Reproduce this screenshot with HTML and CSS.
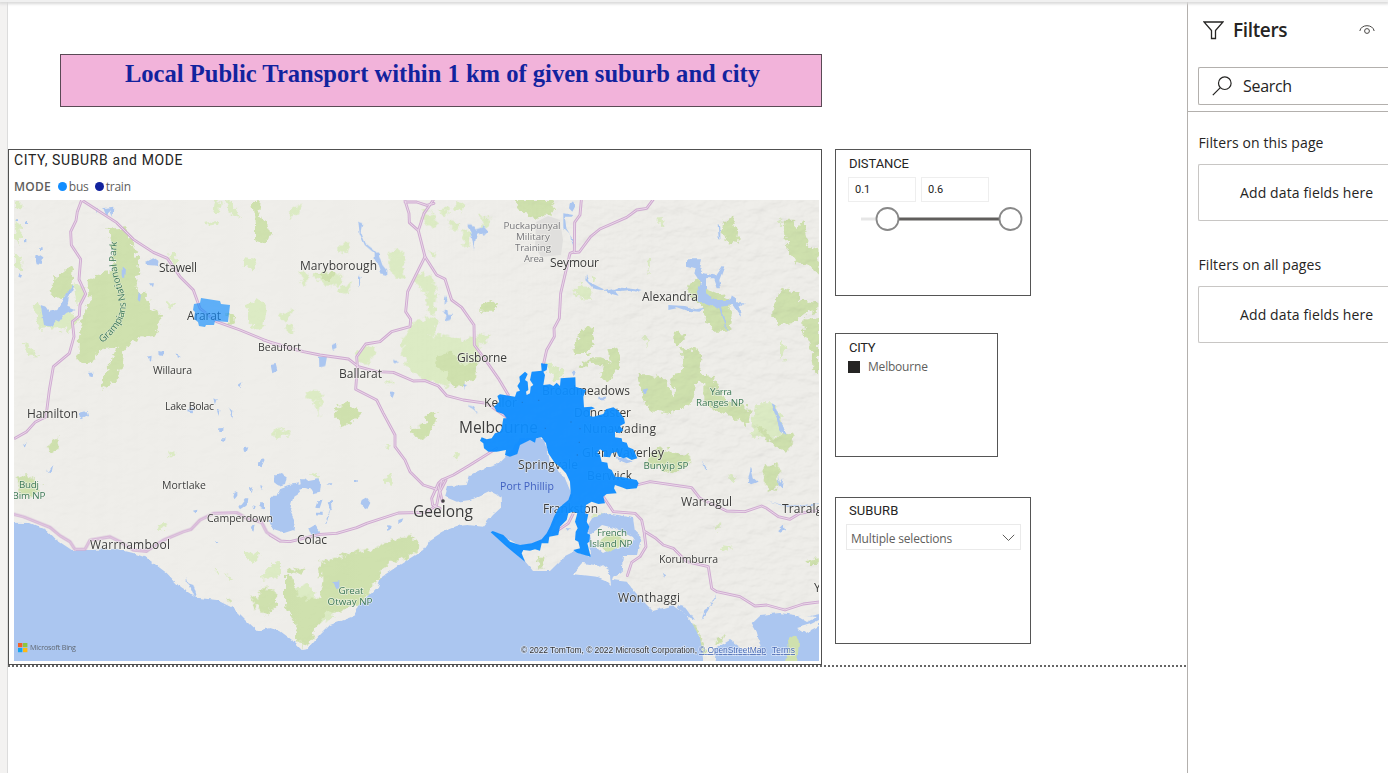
FILE: index.html
```html
<!DOCTYPE html>
<html lang="en">
<head>
<meta charset="utf-8">
<title>Local Public Transport</title>
<link rel="stylesheet" href="styles.css">
</head>
<body>
<div class="app">
  <div class="topbar"></div>
  <div class="gutter"></div>
  <main class="canvas">
    <div class="report">
      <section class="main-col">
        <h1 class="banner"><span>Local Public Transport within 1 km of given suburb and city</span></h1>
        <article class="map-card">
          <h2 class="map-title">CITY, SUBURB and MODE</h2>
          <div class="legend"><b>MODE</b><i class="dot bus"></i><span>bus</span><i class="dot train"></i><span>train</span></div>
          <svg class="map" viewBox="14 200 805 461" width="805" height="461">
            <defs>
              <filter id="rough" x="-5%" y="-5%" width="110%" height="110%"><feTurbulence type="fractalNoise" baseFrequency=".16" numOctaves="3" seed="4"/><feDisplacementMap in="SourceGraphic" scale="10" xChannelSelector="R" yChannelSelector="G"/></filter>
              <filter id="shore" x="-5%" y="-5%" width="110%" height="110%"><feTurbulence type="fractalNoise" baseFrequency=".14" numOctaves="2" seed="9"/><feDisplacementMap in="SourceGraphic" scale="4" xChannelSelector="R" yChannelSelector="G"/></filter>
              <filter id="relief" x="0" y="0" width="100%" height="100%"><feTurbulence type="fractalNoise" baseFrequency=".05 .09" numOctaves="4" seed="12"/><feDiffuseLighting surfaceScale="2.2" lighting-color="#fff"><feDistantLight azimuth="225" elevation="68"/></feDiffuseLighting></filter>
              <linearGradient id="fadeG" x1="0" x2="1"><stop offset="0" stop-color="#555"/><stop offset=".2" stop-color="#333"/><stop offset=".5" stop-color="#222"/><stop offset=".8" stop-color="#fff"/></linearGradient>
              <mask id="fade"><rect x="14" y="200" width="805" height="461" fill="url(#fadeG)"/></mask>
              <g id="roads">
                <g transform="translate(0 190) scale(.33333)">
                  <path d="M245 30L232 65 228 92 212 125 214 165 242 208 237 268 257 312 240 345 238 378 217 395 222 440 208 490 160 530 148 600 138 680 105 697 80 725 45 745"/>
                  <path d="M245 30L350 98 400 148 460 187 502 205 540 260 580 300 600 355 650 395 720 420 830 465 890 480"/>
                </g>
                <g transform="translate(270 190) scale(.33333)">
                  <path d="M-20 450L100 485 150 495 235 507 265 530 320 545 370 547 430 573 465 572 505 588 530 617 580 630 650 640 715 685"/>
                  <path d="M490 30L462 70 445 122 418 98 417 70 405 32M405 36L440 36 470 46 492 40M445 122L465 200 500 255 525 267 545 330 575 352 612 405 613 465 650 515 685 565 715 615"/>
                  <path d="M465 200L413 305 407 365 422 388 420 410 365 425 330 455 287 462 260 500 262 530 257 598 320 630 340 670 375 735 375 770 405 810 420 845 460 885 500 898"/>
                </g>
                <g transform="translate(540 190) scale(.33333)">
                  <path d="M124 30L120 75 104 97 103 185 90 190 62 310 58 385 42 415 43 440 20 480 10 525"/>
                  <path d="M103 188L118 186 152 140 180 117 260 82 290 60 320 55 340 28"/>
                </g>
                <g transform="translate(0 425) scale(.33333)">
                  <path d="M42 268L70 275 150 307 180 332 210 350 225 373 255 373 270 345 330 335 360 350 400 375 440 378 490 345 550 320 573 313 600 285 640 265 710 262 740 280 785 292 800 322 840 347"/>
                </g>
                <g transform="translate(270 425) scale(.33333)">
                  <path d="M0 330L30 348 60 350 150 328 200 325 260 308 290 295 385 264 470 262 500 240 515 165 550 150 600 120 680 70M515 165L505 175 485 220 488 240 510 250M528 165L510 200 517 230"/>
                </g>
                <g transform="translate(540 425) scale(.33333)">
                  <path d="M290 180L330 170 455 188 480 220 560 258 615 260 665 243 680 250 715 275 750 283 780 265 840 255"/>
                  <path d="M190 215L220 260 285 265 305 285 312 318 345 338 370 360 400 370 440 410 505 425 515 490 530 500 600 515 645 543 680 540 735 555 790 537 845 530"/>
                  <path d="M312 318L318 365 300 395 275 412 262 452M40 325L85 295 100 265M135 260L137 290"/>
                </g>
              </g>
            </defs>
            <rect class="land" x="14" y="200" width="805" height="461"/>
            <g class="pale" filter="url(#rough)">
              <g transform="translate(0 190) scale(.33333)">
                <path d="M42 35h25v20H42zM48 90l15 20-5 60-16-50zM42 190l25 20v35l-25-10zM645 30l20 5-5 40-20-10zM620 95l30-5 5 15-35 5zM670 30l30 10 20 45-25-10zM735 205l35 5-10 25-30-5zM500 335l20 5-8 20zM740 340l30-12 28 20-8 60-20 10-30-25zM70 455l30 25 15 25-30-15zM95 345l25-10 40 50 40-20 40 25-30 35-40-10-50 5-10-40zM505 195l20 0 5 30-15-5zM220 280l30 10 5 40-25 10z"/>
              </g>
              <g transform="translate(270 190) scale(.33333)">
                <path d="M355 190l30-12 18 25-5 60-25-5-15-30zM430 250l50 5 20 30-5 90-25-10-5-60-30-30zM430 395l60-15 15 20-15 30-45 25-45-5zM400 440l60-5 60 0 60 20 30-15 20 15-5 60-40 40-50 35-80-25-30-20-30-50zM260 480l30-20 30 25-25 35-30 0zM90 240l25 10-5 40-20-20zM130 255l40-15 50 20-15 30-50-5zM215 285l30-5-15 35-20-10zM30 375l40-15-15 30-25 0zM50 400l20 5-5 30-15-10zM60 60l40-20-15 35-20 5zM205 160l35 0-10 35-25-10zM540 90l30 10-10 25-20-5zM575 120l30 5-5 40-20 5zM455 60l30 10 20 40-20 5-30-20zM480 185l20 0-5 20zM105 600l30 0 25 10-10 25-35-5zM130 635l20 0-5 40zM505 60l35-5-10 25zM630 80l35 5-5 30-20 5zM345 570l20 0 3 15-20 0zM10 720h50v20h-50z"/>
                <path d="M620 430l40 5-10 25-30-5zM560 35l25 10-10 20-20-5z"/>
              </g>
              <g transform="translate(540 190) scale(.33333)">
                <path d="M100 300l25-25 30 30-5 25-40-5zM350 85l30 0-10 25-20-10zM150 260l20 0-5 20zM20 520l45 10 5 35-30 10zM305 435l15 10 0 30zM645 640l60 0 20 50 0 50-90 0zM710 90l20-10-5 30zM720 450l20 20-10 40-10-20zM320 210l10 0-5 50z"/>
              </g>
              <g transform="translate(0 425) scale(.33333)"><path d="M505 80l25 3-5 10-20-3zM470 300l20-10 10 15-20 10zM735 380l50 10-20 20-30-10zM675 445l25 10-15 15zM640 435l20 5-5 10zM800 430l40-25v50l-60 10z"/></g>
              <g transform="translate(270 425) scale(.33333)"><path d="M120 150l20-10 5 20zM345 155l20-5 0 30-20-5zM345 60l20 5-10 10zM550 75l20 10-10 20zM230 435l50-30 20 50-60 40-40-10zM100 565l80-10 20 20-50 20-40 20zM60 500l50-20 30 20-10 40-50 20z"/></g>
              <g transform="translate(540 425) scale(.33333)"><path d="M520 305l25-10-10 20zM545 360l30 5-10 15-20-5zM665 0l40 40-10 10zM565 145l25 10-15 15zM155 280l30-12 20 10-20 10z"/></g>
            </g>
            <g class="park" filter="url(#rough)">
              <g transform="translate(0 190) scale(.33333)">
                <path d="M322 118L375 112 395 155 412 200 418 250 407 290 440 315 450 350 480 370 486 395 460 435 420 440 395 455 370 490 362 540 350 570 305 600 310 560 335 510 350 470 300 480 275 520 250 528 235 510 237 440 255 350 272 340 262 270 310 250 340 240 335 160z"/>
                <path d="M160 265L195 235 218 232 215 280 200 320 178 328 155 310zM685 370l20 8 3 22-22 5zM755 30h25l-5 40 20 30 20 30-20 30-30-10 0-50z"/>
              </g>
              <g transform="translate(270 190) scale(.33333)">
                <path d="M500 495l40-10 30 30 25 20-10 50-30 10-20-20-10-30-30-20zM585 525l35-10-5 50-20 10-20-15zM635 345l30-15 22 15-20 20-40 0zM145 250l50-5-10 25-35 0zM735 30h110v30l-50 30-30-20-20-10zM195 650l40-10 40 30-25 25-30 20-20-30zM470 670l30 0-5 35-20 25-15-20z"/>
              </g>
              <g transform="translate(540 190) scale(.33333)">
                <path d="M555 90l20-10 20 45-5 30-20 12-25-45zM730 95h30l10 20 20-20 12 45 0 25 36 15v75l-25-25-45-15-25-35-5-50zM700 340l30-50 20 10 25 5 5 25 55 10v20l-40 10-40 30-35 5-20-30zM790 390l47-10v170l-20-20-5-60-20-40zM125 415l35-5 5 40-20 45-40 0-5-20zM205 475l25-5 12 25-5 45-35 35-20-10 10-35-40-10-40 15 5-10 35-20 30 0 30 10zM400 425l20 0 15 15-20 25-15-10zM420 470l25 10 20-10 20 25-5 60 20 0 30 20 30 60 55 10 20 20-15 40-50-30-60-20-20-20 0-60-20 0-10 50-40 35-30 0-5-30 20-20-10-50 35-20zM295 550l80 15 25 65 0 40-30-5-40-5-25-35zM445 285l30-20 20 30 60 25 25 45-15 60-40 0-35-50-5-40-40-10zM0 33l45 5-10 40-35-15z"/>
              </g>
              <g transform="translate(0 425) scale(.33333)"><path d="M132 65l20-5 5-23 12 5 5 35-15 5zM50 155l30-5 40 35-20 25-40 0zM780 490l40-3 10 30-20 20 0 35-30-10-20-30-10-20 30 5zM680 520l15 5 0 10z"/></g>
              <g transform="translate(270 425) scale(.33333)"><path d="M365 345l60-10 30 30-40 30-60 20-30 40-10 20-30 50-60 30-60 10-30 50-15 45-20 5-20-30-5-40-30-60 0-90 25 15 20 60 60 0 10-50 0-60 30-10 60-20 60-10zM55 430l50 5-10 10-40-3zM145 415l15-5 0 40-10 10zM0 490l15 20 5 30-20 30zM420 10l60-20-10 50-30 0-20-15zM800 395h20v35h-15z"/></g>
              <g transform="translate(540 425) scale(.33333)"><path d="M330 75l35-5 85 20 0 25-50 30-80-25zM640 0l25 10 35 35 30-20 30 5-2 30-20 20-40-20zM675 120l20-5 22 5 0 60-30 20-15-50zM800 405l37-5v20l-37 0zM745 630l15-10 15 20-5 75-40 0 10-40zM455 590l15 20 30 70-10 10-30-60zM530 640l25-10-10 20-20 15z"/></g>
            </g>
            <rect class="relief" x="14" y="200" width="805" height="461" filter="url(#relief)" mask="url(#fade)"/>
            <path class="military" d="M536 222l12-6 12 4 3 20-2 15-20 2-6-10z"/>
            <g filter="url(#shore)">
              <path class="water" d="M5 522.7L30 523 46.7 530 56.7 540 71.7 550 90 550 116.7 549 133 553 146.7 558 166.7 573 180 587 196.7 597.7 216.7 600 233 608 246.7 621.7 256.7 631 270 628 280 631 292 640 301.7 650 308 649 320 635 330 625 353 616.7 358 606 366.7 598 378 586.7 381.7 576.7 396.7 566.7 423 550 430 540 443 531.7 456.7 526 466.7 525 483 526.7 493 515 502 506.7 501.7 496.7 490 490.7 470 500 456.7 501.7 445 496.7 448 486 466.7 485 470 475 480 470 496.7 465 506.7 455 520 438 545 438 550 462 564 476 572 495 568 507 556 520 550 536 538 545 522 547 505 537 492 532 524 560 533 571 550 571 554 567 563 558 575 552 590 556 588 525 593 516.7 606.7 513 633 518 635 531.7 641.7 538 638 555 623 555 621.7 571.7 613 576.7 612 580 626.7 581.7 640 598 653 611 673 605 686.7 615 700 638 705 670 713 670 716.7 648 730 640 746.7 651.7 761.7 650 756.7 631.7 751.7 623 760 615 780 613 806.7 616.7 830 611.7 830 680 0 680z"/>
              <path class="island" d="M573 574L583 563 600 566 610 576 611 586 605 580 598 577zM602 565l8 6-3 4-7-5zM797 628l14-4 8-4v6l-14 7zM795 615l22 2-10 5z"/>
              <path class="island" d="M590 535l12-10 12 3 20 10-2 6-18 5-10 5-12-10z"/>
            </g>
            <path class="prom" filter="url(#shore)" d="M788 640l8-5 3 8-2 21h-13l5-14zM598 542l12-9 20 7-14 8-8 5z"/>
            <g class="lakes" filter="url(#shore)">
              <g transform="translate(0 190) scale(.33333)"><path d="M105 200l10-8 15 10-5 20-15-2zM122 345l15 5 10 15 25-5 20-40 15 0-5 30 25 10-35 15-15 20-10-5-15 20-20-5zM196 318l22-34 5 3-15 35zM310 55l30-5-2 30-8-20-10 20zM285 55l8 0 0 15zM365 230l10 5-2 25-8 0zM440 215l20-10 15 10 0 12-35-2zM447 280l12 0-3 12zM415 310l8 5-3 20-7-5zM475 480l15 3 0 15-14-3zM440 500l15-3-2 15zM530 490l12 8-8 6zM265 545l12 0-2 14-10-3zM240 668l20-5 4 15-18 10-8-6zM565 650l18 5-5 15-16-3zM58 250l8 3-3 10-8-3zM120 172h8v8h-8zM50 85h7v8h-7zM75 95h6v7h-6zM72 150h7v7h-7zM812 525l15-3 5 20-15 8zM715 585l12-8-5 14zM640 625l10 5-5 15zM650 655l8 5-2 15zM685 650l5 8 10 0-2 28-5-20zM655 715h15v10h-15z"/></g>
              <g transform="translate(270 190) scale(.33333)"><path d="M265 95l12 5-5 25 15 35 25 20 15 15 10 30 12 15 0 15-15-5-10-30-10-10 0-20-30-25-15-35zM592 103l15 0 10 15 25-8 12 15-12 12-20-10-5 20-5 35-5-35zM147 500l24 0-5 28-18 5zM185 468l12-8 3 12-12 8zM267 255l8 5-8 35zM525 315l5 20-10 5zM530 355l5 20 15 0-10 15-18 5 8-15-10-15zM360 605l18 0-8 20-10-10zM580 580l12 8-8 10zM372 512l12 5-8 6zM590 645l20 5 15 20-20-15z"/></g>
              <g transform="translate(540 190) scale(.33333)"><path d="M90 35l10 0 5 15-8 15-10-10zM70 70l30 5-5 5-20 0 5 40 20 30-2 15-8-30-20-20zM138 255l8 20 30 15 20 10 20-5 20 25-20-5-15-12-40-7-25-25zM220 300l25-10 40 5 20 5-15 5-20-5-45 5zM438 208l45 0-5 25 10 15 40 10 20-30 5 2-15 40 5 25-10 0-10-30-25 0 0 45 30 20 40 0 5-15 15 10 0 15 30 0-20 10 5 30-5-5-20-30-35 5 20 75-5-5-20-65-40-15-20 0-10-30 15-30-20-30 5-15-30-8zM385 345l50 3 30 10 30-5-20 12-35-3-30-10-25 5zM533 105l8 5 0 40-5-5zM175 620l25 0-5 8-20 0zM95 545l12 0-5 15zM695 640l10 5 30 80-15 0-10-40zM305 600l18-5-10 15z"/></g>
              <g transform="translate(0 425) scale(.33333)"><path d="M655 12l15-3-2 12-12 0zM667 40l10 0-2 8-10-2zM730 70l15-3-5 14-8-1zM775 110l20-8-10 22-10-4zM700 205l12-5 0 12-8 10-7-5zM715 245l20-25 10 0-2 15-8 8-15 10zM750 190l10-3-5 18zM780 235l12 0 0 18-10-3zM760 240l8 5-5 5zM752 305l15-3-4 15zM645 350l10 2-5 6zM578 257l14-3-2 12zM822 150l18 3v28l-12-4zM820 215l20 5v90l-25-20zM65 60l14-8-4 12zM140 130l5 15 15-25-5 25-15-5zM560 455l5 20 15 5 12 38-10-6-12-30-10-10zM780 180l8 5-2 8z"/></g>
              <g transform="translate(270 425) scale(.33333)"><path d="M12 155l20-8 18 10-5 20-18 5-15-10zM90 160l15 0 10 8 30-5 8 15-3 25-20 5-8-15-20-5-25 5 0-10 15-5zM0 215l20 0 10-25 25-10 30-5 5 25-20 15-10 40 15 30-5 30-30 10-30-10-10-20zM115 310l20-12 15 20-5 15-20 3zM275 225l15-8 12 15-10 20-20-12zM145 225l12 0-8 25-10-2zM140 260l18 0 0 10-18-2zM175 235l10-10 3 25-8 10-12 40-3-8 15-35zM355 300l10 3-3 12-8 2zM385 285l15-5-5 12-10 3zM172 178l15 0-3 6zM255 165h8v6h-8zM190 472l18-3 0 18-10 2z"/></g>
              <g transform="translate(540 425) scale(.33333)"><path d="M490 110l15 25-10-3zM633 125l8 35 12 10-20 8-10-8zM715 155l5 20 10-15-5 30-10-10zM715 315l15-15 5 15-15 8zM530 505l-25 50-20 30 8-30 25-15zM680 225l50 15 60 0 50-5-20 8-80 3zM715 0l10-5 15 35-10-5zM410 540l30 10 25 35-20-10-30-25zM230 95l25 5 20 10-15 5-25-10zM75 310l18 0-10 10zM365 445l10 5-2 8z"/></g>
            </g>
            <use href="#roads" class="road-out"/><use href="#roads" class="road-in"/>
            <g class="town">
              <text x="159" y="272" textLength="38">Stawell</text><text x="187" y="320" textLength="34">Ararat</text>
              <text x="300" y="270" textLength="77">Maryborough</text><text x="550" y="267" textLength="49">Seymour</text>
              <text x="642" y="301" textLength="56">Alexandra</text><text x="457" y="362" textLength="50">Gisborne</text>
              <text x="339" y="378" textLength="43">Ballarat</text><text x="27" y="418" textLength="51">Hamilton</text>
              <text x="90" y="549" textLength="80">Warrnambool</text><text x="297" y="544" textLength="30">Colac</text>
              <text x="484" y="407" textLength="33">Keilor</text><text x="542" y="395" textLength="88">Broadmeadows</text>
              <text x="574" y="417" textLength="57">Doncaster</text><text x="583" y="433" textLength="73">Nunawading</text>
              <text x="582" y="457" textLength="82">Glen Waverley</text><text x="518" y="469" textLength="60">Springvale</text>
              <text x="587" y="480" textLength="45">Berwick</text><text x="543" y="513" textLength="55">Frankston</text>
              <text x="681" y="506" textLength="51">Warragul</text><text x="782" y="513" textLength="55">Traralgon</text>
              <text x="618" y="602" textLength="62">Wonthaggi</text><text x="814" y="592">Yarram</text>
            </g>
            <g class="small">
              <text x="258" y="351" textLength="43">Beaufort</text><text x="153" y="374" textLength="39">Willaura</text>
              <text x="165" y="410" textLength="49">Lake Bolac</text><text x="162" y="489" textLength="44">Mortlake</text>
              <text x="207" y="522" textLength="66">Camperdown</text><text x="659" y="563" textLength="59">Korumburra</text>
            </g>
            <g class="city"><text x="413" y="517" textLength="60">Geelong</text><text x="459" y="433" textLength="79">Melbourne</text></g>
            <g class="park-label">
              <text x="721" y="395" textLength="22">Yarra</text><text x="720" y="406" textLength="48">Ranges NP</text>
              <text x="666" y="469" textLength="45">Bunyip SP</text><text x="612" y="536" textLength="30">French</text><text x="611" y="547" textLength="43">Island NP</text>
              <text x="351" y="594" textLength="25">Great</text><text x="350" y="605" textLength="45">Otway NP</text>
              <text x="29" y="488" textLength="20">Budj</text><text x="29" y="499" textLength="33">Bim NP</text>
            </g>
            <g class="military-label"><text x="532" y="229" textLength="57">Puckapunyal</text><text x="533" y="240" textLength="34">Military</text><text x="533" y="251" textLength="36">Training</text><text x="534" y="262" textLength="20">Area</text></g>
            <path id="grampians" fill="none" d="M102 343C129 322 129 305 121 284C115 266 115 255 118 236"/>
            <text class="grampians"><textPath href="#grampians" textLength="111">Grampians National Park</textPath></text>
            <text class="bay-label" x="500" y="490" textLength="54">Port Phillip</text>
            <path class="bus-zone faded" d="M201 298l19 3 1 3 9 1-2 17-13-1-1 4-8 0-1 2-6-1-1-4-4-3 1-7-2-2 1-6 6-1z"/>
            <g transform="translate(460 350) scale(.33333)">
              <path class="bus-zone" d="M243 40L263 42 260 60 250 65 255 75 250 105 270 103 280 108 290 98 300 108 302 85 346 82 347 110 370 118 378 120 370 140 372 172 395 170 405 175 390 180 390 198 400 200 430 192 438 178 460 172 475 182 492 205 495 220 480 228 490 240 478 250 465 245 465 262 485 265 487 275 500 278 505 292 520 298 532 325 515 330 500 322 490 325 475 318 470 305 455 310 450 322 430 320 432 305 420 298 412 308 420 315 425 335 442 338 445 355 455 360 465 380 490 382 530 390 536 400 530 415 500 418 485 412 465 405 462 415 470 430 440 432 430 440 435 460 415 462 395 455 378 465 375 490 385 493 380 515 388 530 382 550 390 555 388 575 382 580 392 620 350 608 340 600 360 595 355 575 345 570 347 545 353 535 345 515 352 490 340 485 325 490 320 510 300 530 295 555 268 560 265 580 245 580 240 602 225 598 210 602 190 600 185 610 195 635 170 615 140 590 92 547 98 543 130 555 150 575 180 585 215 580 245 568 260 550 270 530 282 500 295 475 325 450 332 430 330 395 318 370 300 350 285 340 265 310 258 280 245 262 228 265 225 278 210 270 180 285 172 312 150 320 135 315 138 300 110 305 85 305 72 295 70 280 60 272 65 262 80 268 95 265 105 250 120 245 125 235 130 205 140 205 130 192 110 185 102 170 118 155 112 138 120 133 165 140 170 125 180 122 172 108 180 95 178 80 195 65 203 72 195 90 203 95 205 120 198 125 200 135 210 130 212 110 220 105 210 90 215 65 245 62z" filter="url(#shore)"/>
              <path class="zone-text" d="M185 157h4M234 151h4M331 216h4M358 236h4M356 277h4M350 315h4M254 235h4"/>
            </g>
            <circle cx="443" cy="501" r="1.800" fill="#444"/>
            <g><rect x="18" y="643" width="4.400" height="4.200" fill="#f2622a"/><rect x="23" y="643" width="4.400" height="4.200" fill="#8cc63f"/><rect x="18" y="648" width="4.400" height="4.200" fill="#16a5ef"/><rect x="23" y="648" width="4.400" height="4.200" fill="#fdb913"/></g>
            <text class="bing" x="30" y="650" textLength="46">Microsoft Bing</text>
            <text class="credits" x="521" y="653" textLength="176">© 2022 TomTom, © 2022 Microsoft Corporation,</text>
            <text class="credits link" x="699" y="653" textLength="67">© OpenStreetMap</text>
            <text class="credits link" x="772" y="653" textLength="23">Terms</text>
          </svg>
        </article>
      </section>
      <aside class="slicers">
        <section class="slicer distance">
          <h3>DISTANCE</h3>
          <div class="range"><span>0.1</span><span>0.6</span></div>
          <svg class="slider" width="175" height="26" viewBox="0 0 175 26"><path d="M12 13h20" stroke="#e6e6e6" stroke-width="3"/><path d="M49 13h103" stroke="#605e5c" stroke-width="3"/><circle cx="38.500" cy="13" r="11"/><circle cx="161.500" cy="13" r="11"/></svg>
        </section>
        <section class="slicer city-slicer">
          <h3>CITY</h3>
          <div class="option"><i></i><span>Melbourne</span></div>
        </section>
        <section class="slicer suburb">
          <h3>SUBURB</h3>
          <div class="select"><span>Multiple selections</span><svg width="13" height="8" viewBox="0 0 13 8"><path d="M.8 .8L6.500 6.500 12.200 .8" fill="none" stroke="#605e5c"/></svg></div>
        </section>
      </aside>
    </div>
    <div class="page-end"></div>
  </main>
  <aside class="filters">
    <header class="filters-head">
      <svg width="21" height="19" viewBox="0 0 21 19"><path d="M1 1h19L12.500 9.500V17.500H8.500V9.500z" fill="none" stroke="#252423" stroke-width="1.300"/></svg>
      <h2>Filters</h2>
      <svg class="eye" width="16" height="10" viewBox="0 0 16 10"><path d="M.8 6C1.500 2.500 4.500 .7 8 .7s6.500 1.800 7.200 5.300" fill="none" stroke="#484644"/><circle cx="8" cy="6" r="2.400" fill="none" stroke="#484644"/></svg>
    </header>
    <div class="search"><svg width="20" height="20" viewBox="0 0 20 20" fill="none" stroke="#252423" stroke-width="1.200"><circle cx="12.800" cy="7.200" r="6.300"/><path d="M8.300 11.700L.8 19.200"/></svg><span>Search</span></div>
    <div class="divider"></div>
    <h3 class="group">Filters on this page</h3>
    <div class="drop"><span>Add data fields here</span></div>
    <h3 class="group second">Filters on all pages</h3>
    <div class="drop"><span>Add data fields here</span></div>
  </aside>
</div>
</body>
</html>
```
FILE: styles.css
```css
* { box-sizing: border-box; }
body { margin: 0; background: #fff; font-family: "Open Sans", "Noto Sans", sans-serif; color: #252423; }
h1, h2, h3 { margin: 0; font-weight: 400; }
.app { width: 1388px; height: 773px; overflow: hidden; display: grid; grid-template: 2px 771px / 8px 1179px 201px; }
.topbar { grid-column: 1 / 4; background: #f0f0f0; box-shadow: 0 1px 3px 1px #d8d8d8; z-index: 1; }
.gutter { background: #f3f2f1; border-right: 1px solid #dcdcdc; }
.canvas { padding-top: 52px; }
.report { display: flex; gap: 13px; height: 611px; }
.main-col { width: 814px; display: flex; flex-direction: column; gap: 42px; }
.banner { margin-left: 52px; height: 53px; background: #f2b3da; border: 1px solid #5a4a55; text-align: center; font: 700 24.57px/38px "Liberation Serif", serif; color: #12239e; }
.banner span { white-space: nowrap; margin-left: 3px; }
.map-card { height: 516px; border: 1px solid #505050; border-bottom-width: 1.5px; display: flex; flex-direction: column; padding-left: 5px; }
.map-title { height: 20px; font: 14px/20px Roboto, sans-serif; letter-spacing: .62px; }
.legend { height: 30px; display: flex; align-items: center; padding-top: 2px; font-size: 12px; color: #605e5c; letter-spacing: -.2px; }
.legend b { font-weight: 600; letter-spacing: .2px; }
.dot { width: 9px; height: 9px; border-radius: 50%; }
.bus { background: #118dff; margin: 0 2px 0 7px; }
.train { background: #12239e; margin: 0 2px 0 6px; }
.map { display: block; }

.land { fill: #efeeea; }
.relief { mix-blend-mode: multiply; opacity: .26; }
.pale { fill: #dcebc4; }
.park { fill: #cfe1ae; }
.military { fill: #e0dfdd; }
.water, .lakes { fill: #abc6f0; }
.island { fill: #efeeea; }
.prom { fill: #cfe1ae; }
.road-out, .road-in { fill: none; stroke-linejoin: round; stroke-linecap: round; }
.road-out { stroke: #cfaad1; stroke-width: 8.5px; }
.road-in { stroke: #ecdcea; stroke-width: 2.8px; }
.map text { font-family: "Open Sans", "Noto Sans", sans-serif; fill: #3c3c3c; stroke: rgba(245,244,240,.65); stroke-width: 1.6px; paint-order: stroke; stroke-linejoin: round; }
.town { font-size: 12px; }
.small { font-size: 10.5px; }
.city { font-size: 15.5px; }
.map .park-label, .map .military-label { font-size: 9.8px; text-anchor: middle; }
.map .park-label text, .map .grampians { fill: #3c7856; }
.map .military-label text { fill: #78787c; }
.map .grampians { font-size: 9.8px; stroke-width: .8px; }
.map .bay-label { font-size: 10.5px; fill: #4060c0; stroke: none; }
.bus-zone { fill: #118dff; opacity: .95; }
.faded { opacity: .65; }
.zone-text { stroke: #187ddb; stroke-width: 4px; }
.map .bing { font-size: 7.2px; fill: #606872; stroke: none; }
.map .credits { font: 8.5px "Liberation Sans", sans-serif; fill: #333; stroke: rgba(255,255,255,.5); }
.map .link { fill: #4a6bb5; text-decoration: underline; }

.slicers { width: 196px; padding-top: 95px; display: flex; flex-direction: column; }
.slicer { border: 1px solid #555; padding: 6px 9px 0 9px; height: 147px; }
.slicer h3 { font: 13px/15px Roboto, sans-serif; padding-left: 4px; }
.distance h3 { letter-spacing: -.1px; }
.range { display: flex; gap: 5px; margin: 6px 0 0 3px; }
.range span { width: 68px; height: 25px; border: 1px solid #eee; padding-left: 6px; font: 11px/23px Roboto, sans-serif; }
.slider { display: block; margin-top: 4px; margin-left: 4px; }
.slider circle { fill: #fff; stroke: #888; stroke-width: 1.8px; }
.city-slicer { margin-top: 37px; width: 163px; height: 124px; }
.city-slicer h3 { letter-spacing: -.3px; }
.option { display: flex; align-items: center; gap: 8px; padding-left: 3px; margin-top: 3px; font-size: 12px; line-height: 17px; color: #605e5c; letter-spacing: -.2px; }
.option i { width: 12px; height: 12px; background: #252423; }
.suburb { margin-top: 40px; padding-top: 5px; }
.suburb h3 { letter-spacing: .1px; }
.select { margin: 6px 0 0 1px; height: 26px; width: 175px; border: 1px solid #eaeaea; padding: 2px 5px 0 4px; display: flex; align-items: center; justify-content: space-between; font-size: 12px; letter-spacing: -.17px; color: #605e5c; }
.page-end { height: 2px; background: repeating-linear-gradient(90deg, #666 0 2px, #fff 2px 4px); }

.filters { border-left: 1px solid #b3b0ad; }
.filters-head { height: 56px; display: flex; align-items: center; padding-left: 15px; }
.filters-head h2 { font-size: 19px; font-weight: 600; width: 126px; margin-left: 9px; letter-spacing: -.35px; }
.search { margin: 9px 0 0 10px; height: 38px; border: 1px solid #b3b0ad; border-right: 0; border-radius: 2px 0 0 2px; display: flex; align-items: center; gap: 11px; padding-left: 13px; font-size: 16px; letter-spacing: -.3px; }
.divider { height: 1px; background: #b3b0ad; margin-top: 6px; }
.group { margin: 21px 0 0 10.5px; font-size: 14px; line-height: 20px; letter-spacing: .1px; }
.group.second { margin-top: 34px; }
.drop { margin: 11px 0 0 10px; height: 57px; border: 1px solid #c8c6c4; border-right: 0; border-radius: 2px 0 0 2px; padding-left: 41px; font-size: 14px; line-height: 55px; white-space: nowrap; letter-spacing: .12px; }
```
